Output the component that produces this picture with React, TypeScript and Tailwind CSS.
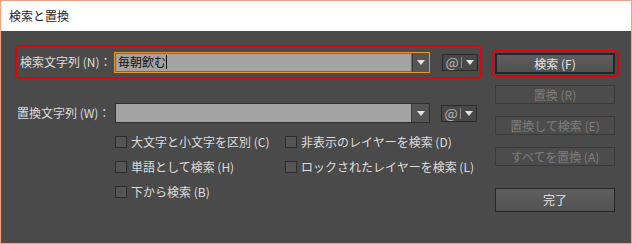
import React from "react";

const font = { fontFamily: '"Noto Sans CJK JP", "Noto Sans", sans-serif' };

function Arrow() {
    return (
        <svg width="8" height="5" viewBox="0 0 8 5">
            <polygon points="0,0 8,0 4,5" fill="#e2e2e2" />
        </svg>
    );
}

function AtBox() {
    return (
        <div className="w-[36px] h-[17px] border border-[#2a2a2a] bg-[#484848] flex items-center shrink-0">
            <span className="w-[18px] text-center text-[14px] leading-none text-[#b4b4b4]">@</span>
            <span className="w-px h-[11px] bg-[#8a8a8a]" />
            <span className="flex-1 flex justify-center">
                <Arrow />
            </span>
        </div>
    );
}

function Check({ label }: { label: string }) {
    return (
        <div className="h-[25px] flex items-center">
            <span className="w-[12px] h-[12px] border border-[#2c2c2c] bg-[#555555] shrink-0" />
            <span className="ml-[4px] text-[12px] text-[#dedede] whitespace-nowrap">{label}</span>
        </div>
    );
}

function Btn({ label, disabled, tall }: { label: string; disabled?: boolean; tall?: boolean }) {
    return (
        <div
            className={
                "w-[120px] flex items-center justify-center text-[12px] border " +
                (tall ? "h-[24px] " : "h-[19px] ") +
                (disabled
                    ? "border-[#3a3a3a] bg-[#4c4c4c] text-[#7e7e7e]"
                    : "border-[#252525] bg-gradient-to-b from-[#5e5e5e] to-[#525252] text-[#e6e6e6]")
            }
        >
            {label}
        </div>
    );
}

export default function App() {
    return (
        <div style={font} className="w-[632px] h-[244px] border border-[#eba482] flex flex-col overflow-hidden">
            <div className="h-[30px] bg-white flex items-center pl-[8px] text-[12px] text-[#1e1e1e] shrink-0">
                検索と置換
            </div>
            <div className="flex-1 bg-[#4a4a4a] flex pt-[14px] pl-[14px]">
                <div className="w-[467px] flex flex-col">
                    <div className="h-[34px] border-2 border-[#e4000c] rounded-[5px] flex items-center pl-[3px]">
                        <span className="w-[94px] text-[12px] text-[#dedede] whitespace-nowrap">検索文字列 (N)：</span>
                        <div className="w-[316px] h-[21px] border border-[#f0942e] flex">
                            <div className="flex-1 bg-[#a3a3a3] border border-[#6a6a6a] flex items-center pl-[2px]">
                                <span className="text-[12px] text-[#111111] leading-none">毎朝飲む</span>
                                <span className="w-px h-[14px] bg-[#111111]" />
                            </div>
                            <div className="w-[17px] bg-[#555555] border-l border-[#3a3a3a] flex items-center justify-center">
                                <Arrow />
                            </div>
                        </div>
                        <div className="ml-[12px]">
                            <AtBox />
                        </div>
                    </div>
                    <div className="mt-[24px] h-[20px] flex items-center pl-[2px]">
                        <span className="w-[98px] text-[12px] text-[#dedede] whitespace-nowrap">置換文字列 (W)：</span>
                        <div className="w-[315px] h-[20px] border border-[#2e2e2e] flex">
                            <div className="flex-1 bg-[#a3a3a3]" />
                            <div className="w-[18px] bg-[#555555] border-l border-[#3a3a3a] flex items-center justify-center">
                                <Arrow />
                            </div>
                        </div>
                        <div className="ml-[11px]">
                            <AtBox />
                        </div>
                    </div>
                    <div className="mt-[6px] ml-[100px] grid grid-cols-[170px_auto]">
                        <Check label="大文字と小文字を区別 (C)" />
                        <Check label="非表示のレイヤーを検索 (D)" />
                        <Check label="単語として検索 (H)" />
                        <Check label="ロックされたレイヤーを検索 (L)" />
                        <Check label="下から検索 (B)" />
                    </div>
                </div>
                <div className="ml-[9px] mt-[5px] w-[128px] flex flex-col">
                    <div className="h-[27px] border-2 border-[#e4000c] rounded-[5px] flex items-center justify-center">
                        <div className="w-[120px] h-[21px] border-2 border-[#262626] bg-gradient-to-b from-[#5e5e5e] to-[#505050] flex items-center justify-center text-[12px] text-[#e6e6e6]">
                            検索 (F)
                        </div>
                    </div>
                    <div className="ml-[4px] mt-[8px] flex flex-col gap-[12px]">
                        <Btn label="置換 (R)" disabled />
                        <Btn label="置換して検索 (E)" disabled />
                        <Btn label="すべてを置換 (A)" disabled />
                    </div>
                    <div className="ml-[4px] mt-[22px]">
                        <Btn label="完了" tall />
                    </div>
                </div>
            </div>
        </div>
    );
}
